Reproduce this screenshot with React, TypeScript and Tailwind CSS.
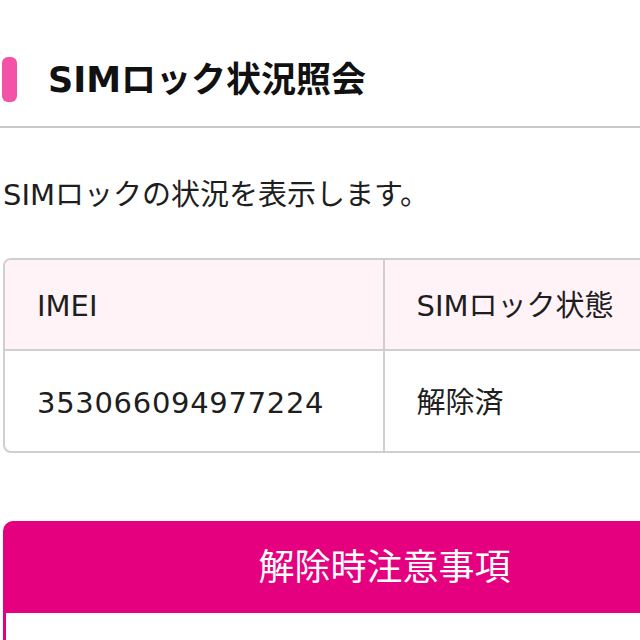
export default function App() {
  return (
    <div className="w-[640px] h-[640px] overflow-hidden bg-white text-[#1e1e1e] font-['DejaVu_Sans','Noto_Sans_CJK_JP',sans-serif]">
      <div className="w-[766px]">
        <div className="flex items-center h-[126px] pt-[32px]">
          <div className="ml-[2px] w-[15px] h-[45px] rounded-[6px] bg-[#f252a8]" />
          <h1 className="ml-[31px] text-[35px] leading-[45px] font-bold text-[#111] pt-[3px]">SIMロック状況照会</h1>
        </div>
        <div className="h-[2px] bg-[#c9c9c9]" />
        <p className="mt-[47px] ml-[3px] text-[29px] leading-[40px]">SIMロックの状況を表示します。</p>
        <div className="mt-[43px] ml-[3px] border-2 border-[#cfcfcf] rounded-[8px] overflow-hidden">
          <div className="grid grid-cols-2 h-[91px] bg-[#fff3f8] border-b-2 border-[#cfcfcf] text-[29px]">
            <div className="flex items-center pl-[32px] pt-[4px] border-r-2 border-[#cfcfcf]">IMEI</div>
            <div className="flex items-center pl-[32px] pt-[4px]">SIMロック状態</div>
          </div>
          <div className="grid grid-cols-2 h-[100px] text-[29px]">
            <div className="flex items-center pl-[32px] pt-[6px] border-r-2 border-[#cfcfcf] tracking-[0.7px]">353066094977224</div>
            <div className="flex items-center pl-[32px] pt-[6px]">解除済</div>
          </div>
        </div>
        <div className="mt-[68px] ml-[3px] rounded-t-[10px] overflow-hidden">
          <div className="h-[92px] bg-[#e4007f] flex items-center justify-center text-white text-[36px] pt-[2px]">解除時注意事項</div>
          <div className="h-[40px] border-l-[3px] border-[#e4007f] bg-white" />
        </div>
      </div>
    </div>
  );
}
